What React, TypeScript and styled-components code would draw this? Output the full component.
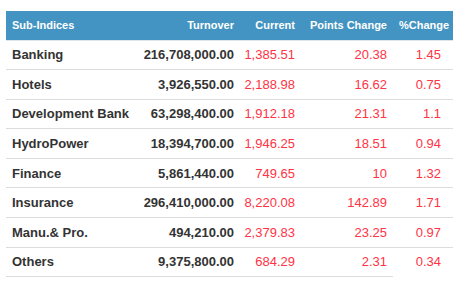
import React from "react";
import styled, { createGlobalStyle } from "styled-components";

const Global = createGlobalStyle`
  html, body { margin: 0; padding: 0; background: #fff; }
  body { font-family: "Liberation Sans", Arial, sans-serif; }
`;

const Page = styled.div`
  padding: 11px 1px 0 6px;
`;

const Grid = styled.div`
  display: grid;
  grid-template-columns: 133px 101px 61px 92px 60px;
  width: 447px;
`;

const HeadCell = styled.div<{ $align?: string; $pr?: number }>`
  background: #4394c2;
  color: #fff;
  font-weight: bold;
  font-size: 11px;
  height: 29.5px;
  display: flex;
  align-items: center;
  justify-content: ${(p) => p.$align || "flex-end"};
  padding: 0 ${(p) => p.$pr ?? 6}px 0 6px;
  border-bottom: 1px solid #dde6ec;
  box-sizing: border-box;
  white-space: nowrap;
`;

const Cell = styled.div<{ $kind: "name" | "turn" | "red"; $pr?: number; $noBorder?: boolean }>`
  height: 29.6px;
  box-sizing: border-box;
  border-bottom: 1px solid ${(p) => (p.$noBorder ? "transparent" : "#dddddd")};
  display: flex;
  align-items: center;
  justify-content: ${(p) => (p.$kind === "name" ? "flex-start" : "flex-end")};
  padding: 0 ${(p) => p.$pr ?? 6}px 0 6px;
  font-size: 13px;
  white-space: nowrap;
  color: ${(p) => (p.$kind === "red" ? "#ff3344" : "#333")};
  font-weight: ${(p) => (p.$kind === "red" ? "normal" : "bold")};
`;

const rows = [
  ["Banking", "216,708,000.00", "1,385.51", "20.38", "1.45"],
  ["Hotels", "3,926,550.00", "2,188.98", "16.62", "0.75"],
  ["Development Bank", "63,298,400.00", "1,912.18", "21.31", "1.1"],
  ["HydroPower", "18,394,700.00", "1,946.25", "18.51", "0.94"],
  ["Finance", "5,861,440.00", "749.65", "10", "1.32"],
  ["Insurance", "296,410,000.00", "8,220.08", "142.89", "1.71"],
  ["Manu.& Pro.", "494,210.00", "2,379.83", "23.25", "0.97"],
  ["Others", "9,375,800.00", "684.29", "2.31", "0.34"],
];

export default function App() {
  return (
    <Page>
      <Global />
      <Grid>
        <HeadCell $align="flex-start">Sub-Indices</HeadCell>
        <HeadCell>Turnover</HeadCell>
        <HeadCell>Current</HeadCell>
        <HeadCell>Points Change</HeadCell>
        <HeadCell $align="center" $pr={4}>%Change</HeadCell>
        {rows.map((r, i) => {
          const last = i === rows.length - 1;
          return (
            <React.Fragment key={r[0]}>
              <Cell $kind="name">{r[0]}</Cell>
              <Cell $kind="turn">{r[1]}</Cell>
              <Cell $kind="red">{r[2]}</Cell>
              <Cell $kind="red">{r[3]}</Cell>
              <Cell $kind="red" $pr={12} $noBorder={last}>{r[4]}</Cell>
            </React.Fragment>
          );
        })}
      </Grid>
    </Page>
  );
}
